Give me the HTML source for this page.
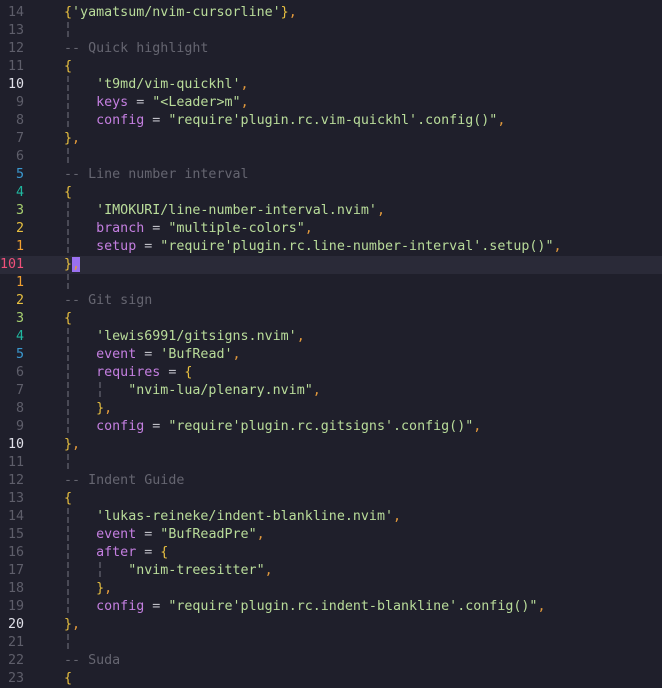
<!DOCTYPE html>
<html><head><meta charset="utf-8"><style>
body{margin:0;background:#1f1f2b;width:662px;height:678px;overflow:hidden;font-family:"DejaVu Sans Mono","Liberation Mono",monospace;font-size:13.33px;}
.w{padding-top:4px}
.l{height:18px;line-height:18px;white-space:pre;position:relative;color:#c8c8d0}
.n{position:absolute;left:0;width:24px;text-align:right;color:#5e5e6a}
.c{position:absolute;left:64px;height:18px}
.cl{background:#2a2a38}
.g{display:inline-block;width:8.03px;height:18px;vertical-align:top;background:repeating-linear-gradient(to bottom,#4a4a56 0 6px,transparent 6px 9px) no-repeat 3px 0/2px 18px;color:transparent}
.s{color:#b9dc9a}.k{color:#c47fe0}.b{color:#e8c040}.p{color:#e39a3c}.m{color:#656570}.o{color:#c0c0c8}
.n1{color:#f0a030}.n2{color:#e8c040}.n3{color:#a8d070}.n4{color:#20b8a0}.n5{color:#3a98d0}.nb{color:#e0e0e8}.nr{color:#f0507a}
.cur{background:#9a70f0;color:#e39a3c}
</style></head><body><div class="w">
<div class="l"><span class="n">14</span><span class="c"><span class="b">{</span><span class="s">'yamatsum/nvim-cursorline'</span><span class="b">}</span><span class="p">,</span></span></div>
<div class="l"><span class="n">13</span><span class="c"><span class="g"> </span></span></div>
<div class="l"><span class="n">12</span><span class="c m">-- Quick highlight</span></div>
<div class="l"><span class="n">11</span><span class="c b">{</span></div>
<div class="l"><span class="n nb">10</span><span class="c"><span class="g"> </span>   <span class="s">'t9md/vim-quickhl'</span><span class="p">,</span></span></div>
<div class="l"><span class="n">9</span><span class="c"><span class="g"> </span>   <span class="k">keys</span><span class="o"> = </span><span class="s">"&lt;Leader&gt;m"</span><span class="p">,</span></span></div>
<div class="l"><span class="n">8</span><span class="c"><span class="g"> </span>   <span class="k">config</span><span class="o"> = </span><span class="s">"require'plugin.rc.vim-quickhl'.config()"</span><span class="p">,</span></span></div>
<div class="l"><span class="n">7</span><span class="c"><span class="b">}</span><span class="p">,</span></span></div>
<div class="l"><span class="n">6</span><span class="c"><span class="g"> </span></span></div>
<div class="l"><span class="n n5">5</span><span class="c m">-- Line number interval</span></div>
<div class="l"><span class="n n4">4</span><span class="c b">{</span></div>
<div class="l"><span class="n n3">3</span><span class="c"><span class="g"> </span>   <span class="s">'IMOKURI/line-number-interval.nvim'</span><span class="p">,</span></span></div>
<div class="l"><span class="n n2">2</span><span class="c"><span class="g"> </span>   <span class="k">branch</span><span class="o"> = </span><span class="s">"multiple-colors"</span><span class="p">,</span></span></div>
<div class="l"><span class="n n1">1</span><span class="c"><span class="g"> </span>   <span class="k">setup</span><span class="o"> = </span><span class="s">"require'plugin.rc.line-number-interval'.setup()"</span><span class="p">,</span></span></div>
<div class="l cl"><span class="n nr">101</span><span class="c"><span class="b">}</span><span class="cur">,</span></span></div>
<div class="l"><span class="n n1">1</span><span class="c"><span class="g"> </span></span></div>
<div class="l"><span class="n n2">2</span><span class="c m">-- Git sign</span></div>
<div class="l"><span class="n n3">3</span><span class="c b">{</span></div>
<div class="l"><span class="n n4">4</span><span class="c"><span class="g"> </span>   <span class="s">'lewis6991/gitsigns.nvim'</span><span class="p">,</span></span></div>
<div class="l"><span class="n n5">5</span><span class="c"><span class="g"> </span>   <span class="k">event</span><span class="o"> = </span><span class="s">'BufRead'</span><span class="p">,</span></span></div>
<div class="l"><span class="n">6</span><span class="c"><span class="g"> </span>   <span class="k">requires</span><span class="o"> = </span><span class="b">{</span></span></div>
<div class="l"><span class="n">7</span><span class="c"><span class="g"> </span>   <span class="g"> </span>   <span class="s">"nvim-lua/plenary.nvim"</span><span class="p">,</span></span></div>
<div class="l"><span class="n">8</span><span class="c"><span class="g"> </span>   <span class="b">}</span><span class="p">,</span></span></div>
<div class="l"><span class="n">9</span><span class="c"><span class="g"> </span>   <span class="k">config</span><span class="o"> = </span><span class="s">"require'plugin.rc.gitsigns'.config()"</span><span class="p">,</span></span></div>
<div class="l"><span class="n nb">10</span><span class="c"><span class="b">}</span><span class="p">,</span></span></div>
<div class="l"><span class="n">11</span><span class="c"><span class="g"> </span></span></div>
<div class="l"><span class="n">12</span><span class="c m">-- Indent Guide</span></div>
<div class="l"><span class="n">13</span><span class="c b">{</span></div>
<div class="l"><span class="n">14</span><span class="c"><span class="g"> </span>   <span class="s">'lukas-reineke/indent-blankline.nvim'</span><span class="p">,</span></span></div>
<div class="l"><span class="n">15</span><span class="c"><span class="g"> </span>   <span class="k">event</span><span class="o"> = </span><span class="s">"BufReadPre"</span><span class="p">,</span></span></div>
<div class="l"><span class="n">16</span><span class="c"><span class="g"> </span>   <span class="k">after</span><span class="o"> = </span><span class="b">{</span></span></div>
<div class="l"><span class="n">17</span><span class="c"><span class="g"> </span>   <span class="g"> </span>   <span class="s">"nvim-treesitter"</span><span class="p">,</span></span></div>
<div class="l"><span class="n">18</span><span class="c"><span class="g"> </span>   <span class="b">}</span><span class="p">,</span></span></div>
<div class="l"><span class="n">19</span><span class="c"><span class="g"> </span>   <span class="k">config</span><span class="o"> = </span><span class="s">"require'plugin.rc.indent-blankline'.config()"</span><span class="p">,</span></span></div>
<div class="l"><span class="n nb">20</span><span class="c"><span class="b">}</span><span class="p">,</span></span></div>
<div class="l"><span class="n">21</span><span class="c"><span class="g"> </span></span></div>
<div class="l"><span class="n">22</span><span class="c m">-- Suda</span></div>
<div class="l"><span class="n">23</span><span class="c b">{</span></div>
</div></body></html>
